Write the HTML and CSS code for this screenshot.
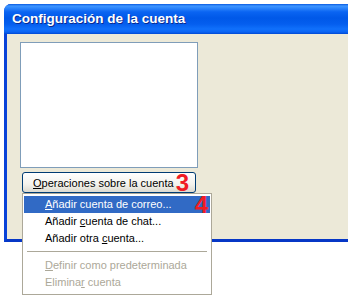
FILE: index.html
```html
<!DOCTYPE html>
<html lang="es">
<head>
  <meta charset="UTF-8">
  <title>Configuración de la cuenta</title>
  <link rel="stylesheet" href="styles.css">
</head>
<body>
  <div class="ventana">
    <div class="titulo">Configuración de la cuenta</div>
    <div class="cliente">
      <div class="lista"></div>
      <button class="boton"><span><u>O</u>peraciones sobre la cuenta</span><b class="marca">3</b></button>
    </div>
  </div>

  <ul class="menu">
    <li class="activo"><span><u>A</u>ñadir cuenta de correo...</span><b class="marca">4</b></li>
    <li>Añadir <u>c</u>uenta de chat...</li>
    <li>Añadir otra <u>c</u>uenta...</li>
    <li class="separador"></li>
    <li class="inactivo"><u>D</u>efinir como predeterminada</li>
    <li class="inactivo">Elimina<u>r</u> cuenta</li>
  </ul>
</body>
</html>
```

FILE: styles.css
```css
*{
  margin: 0; padding: 0;
  box-sizing: border-box;
}
body{
  background: #fff;
  font-family: "Liberation Sans", Arial, sans-serif;
  font-size: 11px;
  padding: 4px 0 0 4px;
  overflow: hidden;
}
.ventana{
  width: 360px;
  border-left: 3px solid #0842D8;
  border-bottom: 3px solid #0637C6;
  border-top-left-radius: 7px;
  background: #0058EE;
}
.titulo{
  height: 30px;
  margin-left: -3px;
  padding: 7px 0 0 8px;
  border-top-left-radius: 7px;
  background: linear-gradient(#0A5AE0 0px, #3D95FF 2px, #2D86FC 4px, #0A64F2 8px, #0058E8 14px, #045EEE 20px, #1070FB 25px, #0A64F4 28px, #0048D2 30px);
  color: #fff;
  font-weight: bold;
  font-size: 13.5px;
  text-shadow: 1px 1px 0 #0A2A90;
}
.cliente{
  height: 205px;
  background: #ECE9D8;
  padding: 8px 0 0 13px;
}
.lista{
  width: 178px;
  height: 126px;
  background: #fff;
  border: 1px solid #7F9DB9;
}
.boton{
  display: flex;
  align-items: center;
  justify-content: space-between;
  margin: 4px 0 0 2px;
  width: 174px;
  height: 21px;
  padding: 0 6px 0 10px;
  border: 1px solid #003C74;
  border-radius: 3px;
  background: linear-gradient(#FFFFFF, #F3F2EC 60%, #DCDAD0);
  font-family: inherit;
  font-size: 11px;
  color: #000;
}
.marca{
  color: #F01C24;
  font-size: 24px;
  font-weight: bold;
  line-height: 16px;
}
.menu{
  position: absolute;
  left: 22px;
  top: 193px;
  width: 190px;
  height: 102px;
  list-style: none;
  background: #fff;
  border: 1px solid #ACA899;
  padding: 2px 1px;
}
.menu li{
  height: 17px;
  line-height: 17px;
  padding-left: 21px;
  color: #000;
  white-space: nowrap;
}
.menu li.activo{
  display: flex;
  align-items: center;
  justify-content: space-between;
  background: #316AC5;
  color: #fff;
  padding-right: 2px;
}
.menu li.separador{
  height: 10px;
  padding: 0;
  margin: 0 3px;
  background: linear-gradient(transparent 4px, #ACA899 4px, #ACA899 5px, transparent 5px);
}
.menu li.inactivo{
  color: #ACA899;
}
```
